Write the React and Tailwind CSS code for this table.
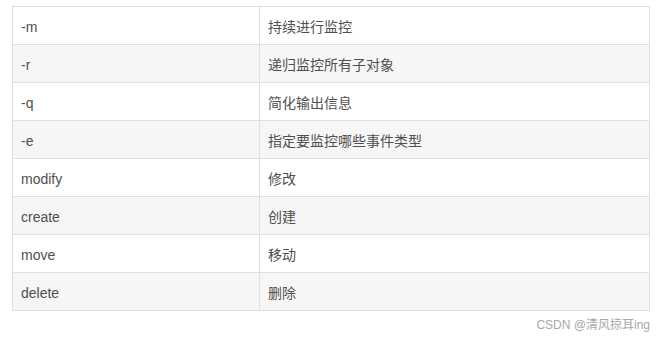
import React from "react";

const rows = [
  ["-m", "持续进行监控"],
  ["-r", "递归监控所有子对象"],
  ["-q", "简化输出信息"],
  ["-e", "指定要监控哪些事件类型"],
  ["modify", "修改"],
  ["create", "创建"],
  ["move", "移动"],
  ["delete", "删除"],
];

export default function App() {
  return (
    <div
      className="w-[659px] h-[337px] bg-white pt-[6px] pl-[12px]"
      style={{ fontFamily: '"Liberation Sans", "Noto Sans CJK SC", sans-serif' }}
    >
      <table className="border-collapse w-[638px] text-[14px] text-[#4f4f4f]">
        <tbody>
          {rows.map(([a, b], i) => (
            <tr key={i} className={i % 2 === 1 ? "bg-[#f6f6f6]" : "bg-white"}>
              <td className="border border-[#e0e0e0] h-[38px] w-[247px] px-[8px] pt-[3px] pb-0 align-middle">
                {a}
              </td>
              <td className="border border-[#e0e0e0] h-[38px] px-[8px] pt-[3px] pb-0 align-middle">
                {b}
              </td>
            </tr>
          ))}
        </tbody>
      </table>
      <div className="w-[638px] text-right text-[12px] text-[#a8a8a8] mt-[6px] leading-[16px]">
        CSDN @清风掠耳ing
      </div>
    </div>
  );
}
